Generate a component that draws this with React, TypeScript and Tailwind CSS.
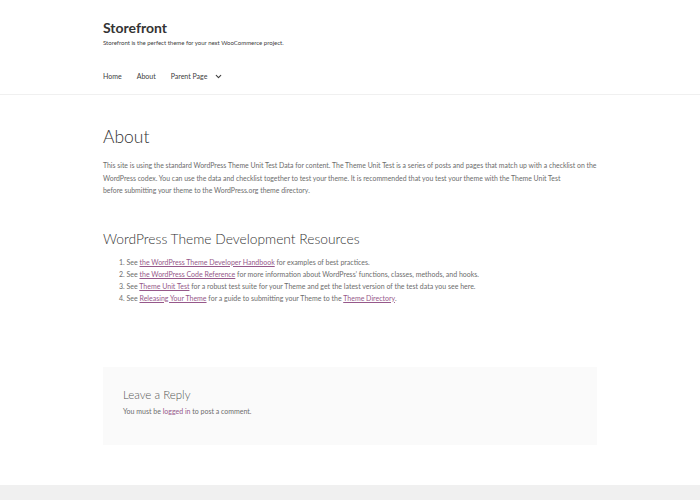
import { ChevronDown } from "lucide-react";

const linkCls = "text-[#96588a] underline underline-offset-1";

const resources = [
  {
    link: "the WordPress Theme Developer Handbook",
    after: " for examples of best practices.",
  },
  {
    link: "the WordPress Code Reference",
    after: " for more information about WordPress’ functions, classes, methods, and hooks.",
  },
  {
    link: "Theme Unit Test",
    after: " for a robust test suite for your Theme and get the latest version of the test data you see here.",
  },
];

const App = () => {
  return (
    <div
      className="min-h-[500px] bg-white text-[#6d6d6d] flex flex-col"
      style={{ fontFamily: "Lato, 'Open Sans', sans-serif" }}
    >
      {/* site header */}
      <header className="border-b border-[#f0f0f0]">
        <div className="w-[494px] mx-auto pt-[19px] pb-[12px]">
          <h1 className="text-[14px] leading-[18px] font-bold text-[#333333]">
            Storefront
          </h1>
          <p className="text-[6px] leading-[8px] mt-[2px] text-[#404040]">
            Storefront is the perfect theme for your next WooCommerce project.
          </p>
          <nav className="flex items-center gap-[15px] mt-[23px] text-[7px] leading-[12px] text-[#404040]">
            <a>Home</a>
            <a>About</a>
            <a className="flex items-center gap-[7px]">
              Parent Page
              <ChevronDown size={9} strokeWidth={3} />
            </a>
          </nav>
        </div>
      </header>

      {/* page content */}
      <main className="w-[494px] mx-auto flex-1">
        <h1 className="mt-[30px] text-[17.5px] leading-[24px] font-light text-[#333333]">
          About
        </h1>
        <p className="mt-[10px] text-[6.9px] leading-[12.5px]">
          This site is using the standard WordPress Theme Unit Test Data for content. The Theme Unit Test is a
          series of posts and pages that match up with a checklist on the WordPress codex. You can use the data
          and checklist together to test your theme. It is recommended that you test your theme with the Theme
          Unit Test
          <br />
          before submitting your theme to the WordPress.org theme directory.
        </p>

        <h2 className="mt-[33px] text-[13.8px] leading-[18px] font-light text-[#333333]">
          WordPress Theme Development Resources
        </h2>
        <ol className="mt-[8px] ml-[16px] list-decimal list-inside text-[7px] leading-[12px]">
          {resources.map((r) => (
            <li key={r.link}>
              See <a className={linkCls}>{r.link}</a>
              {r.after}
            </li>
          ))}
          <li>
            See <a className={linkCls}>Releasing Your Theme</a> for a guide to submitting your Theme to the{" "}
            <a className={linkCls}>Theme Directory</a>.
          </li>
        </ol>

        {/* comments area */}
        <section className="mt-[63px] bg-[#fafafa] h-[78px] px-[20px] pt-[21px]">
          <h3 className="text-[11.5px] leading-[14px] font-light text-[#555555]">Leave a Reply</h3>
          <p className="mt-[4px] text-[7px] leading-[10px]">
            You must be <a className="text-[#96588a]">logged in</a> to post a comment.
          </p>
        </section>
      </main>

      <footer className="h-[16px] bg-[#f0f0f0] mt-[40px]" />
    </div>
  );
};

export default App;
